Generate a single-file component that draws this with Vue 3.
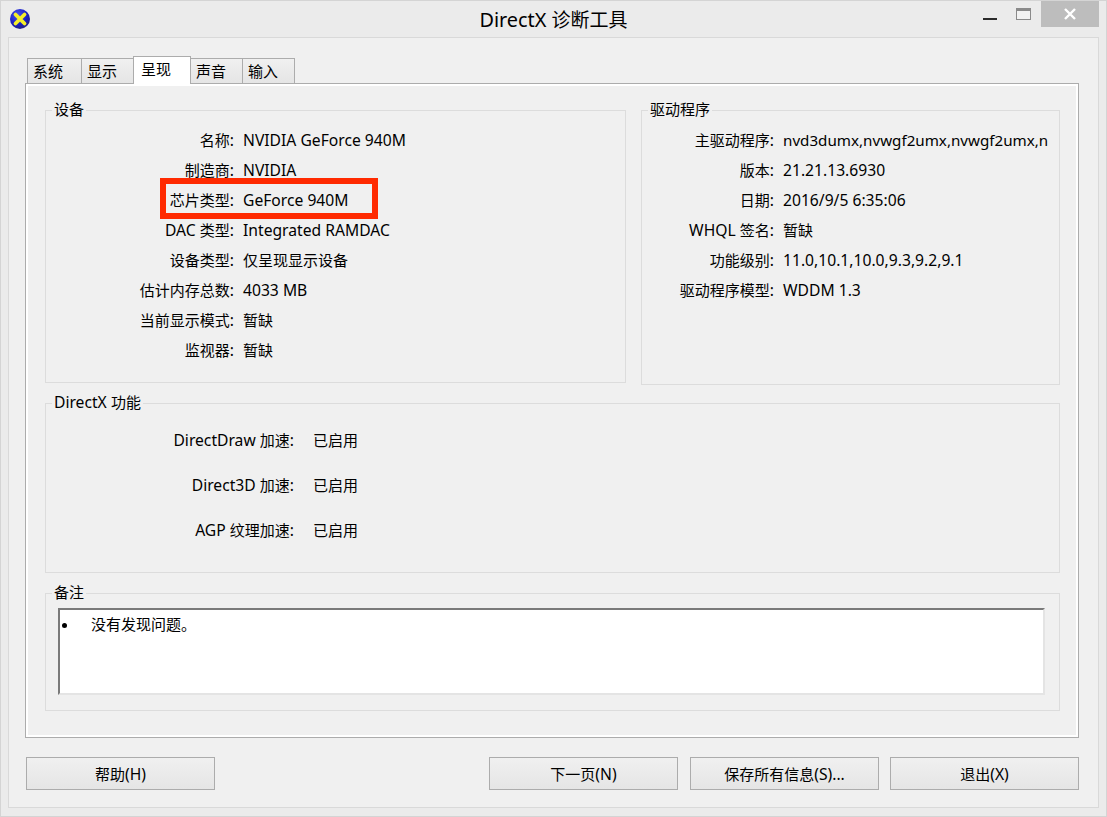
<script setup>
import { h } from 'vue'

const Mixed = (props) =>
  props.text
    .split(/([\u0000-\u02ff]+)/)
    .filter(Boolean)
    .map((part) =>
      /^[\u0000-\u02ff]/.test(part) ? h('span', { class: 'latin' }, part) : part
    )
Mixed.props = ['text']

const tabs = [
  { name: '系统', width: 55 },
  { name: '显示', width: 53 },
  { name: '呈现', width: 58, active: true },
  { name: '声音', width: 53 },
  { name: '输入', width: 53 },
]
const device = [
  ['名称:', 'NVIDIA GeForce 940M'],
  ['制造商:', 'NVIDIA'],
  ['芯片类型:', 'GeForce 940M'],
  ['DAC 类型:', 'Integrated RAMDAC'],
  ['设备类型:', '仅呈现显示设备'],
  ['估计内存总数:', '4033 MB'],
  ['当前显示模式:', '暂缺'],
  ['监视器:', '暂缺'],
]
const driver = [
  ['主驱动程序:', 'nvd3dumx,nvwgf2umx,nvwgf2umx,n', 'tight'],
  ['版本:', '21.21.13.6930'],
  ['日期:', '2016/9/5 6:35:06'],
  ['WHQL 签名:', '暂缺'],
  ['功能级别:', '11.0,10.1,10.0,9.3,9.2,9.1'],
  ['驱动程序模型:', 'WDDM 1.3'],
]
const features = [
  ['DirectDraw 加速:', '已启用'],
  ['Direct3D 加速:', '已启用'],
  ['AGP 纹理加速:', '已启用'],
]
</script>

<template>
  <div class="window">
    <header class="titlebar">
      <svg class="app-icon" width="24" height="24" viewBox="0 0 24 24">
        <defs>
          <radialGradient id="orb" cx="38%" cy="30%" r="80%">
            <stop offset="0" stop-color="#4a55f0" />
            <stop offset="0.6" stop-color="#1a1fc0" />
            <stop offset="0.85" stop-color="#20208a" />
            <stop offset="1" stop-color="#a8a8c8" />
          </radialGradient>
        </defs>
        <circle cx="12" cy="12" r="10" fill="url(#orb)" />
        <path d="M7.5 7.5 L16.5 16.5 M16.5 7.5 L7.5 16.5" stroke="#f6ee2a" stroke-width="3.8" stroke-linecap="round" />
      </svg>
      <h1 class="title"><Mixed text="DirectX 诊断工具" /></h1>
      <div class="controls">
        <span class="minimize"></span>
        <span class="maximize"></span>
        <span class="close">
          <svg width="14" height="12" viewBox="0 0 14 12">
            <path d="M2 1 L12 11 M12 1 L2 11" stroke="#fff" stroke-width="2.4" />
          </svg>
        </span>
      </div>
    </header>

    <div class="client">
      <nav class="tabs">
        <span
          v-for="tab in tabs"
          :key="tab.name"
          class="tab"
          :class="{ active: tab.active }"
          :style="{ width: tab.width + 'px' }"
        >{{ tab.name }}</span>
      </nav>

      <main class="panel">
        <div class="top-row">
          <section class="group device">
            <span class="legend">设备</span>
            <dl class="fields">
              <template v-for="row in device" :key="row[0]">
                <dt><Mixed :text="row[0]" /></dt>
                <dd><Mixed :text="row[1]" /></dd>
              </template>
            </dl>
            <span class="highlight"></span>
          </section>
          <section class="group driver">
            <span class="legend">驱动程序</span>
            <dl class="fields">
              <template v-for="row in driver" :key="row[0]">
                <dt><Mixed :text="row[0]" /></dt>
                <dd :class="row[2]"><Mixed :text="row[1]" /></dd>
              </template>
            </dl>
          </section>
        </div>

        <section class="group features">
          <span class="legend"><Mixed text="DirectX 功能" /></span>
          <dl class="fields">
            <template v-for="row in features" :key="row[0]">
              <dt><Mixed :text="row[0]" /></dt>
              <dd>{{ row[1] }}</dd>
            </template>
          </dl>
        </section>

        <section class="group notes">
          <span class="legend">备注</span>
          <div class="notes-box">
            <span class="bullet"></span>
            <span>没有发现问题。</span>
          </div>
        </section>
      </main>

      <footer class="buttons">
        <button class="btn"><Mixed text="帮助(H)" /></button>
        <span class="spacer"></span>
        <button class="btn next"><Mixed text="下一页(N)" /></button>
        <button class="btn"><Mixed text="保存所有信息(S)..." /></button>
        <button class="btn"><Mixed text="退出(X)" /></button>
      </footer>
    </div>
  </div>
</template>

<style>
html, body { margin: 0; padding: 0; background: #ebebeb; }
.latin { font-size: 1.045em; }
.tight .latin { font-size: 1.012em; }
</style>

<style scoped>
.window {
  box-sizing: border-box;
  width: 1107px;
  height: 817px;
  background: #ebebeb;
  border: 1px solid #d4d4d4;
  padding: 0 7px 8px;
  display: flex;
  flex-direction: column;
  font-family: "Noto Sans", "Noto Sans CJK SC", sans-serif;
  font-size: 15px;
  color: #000;
}
.titlebar {
  position: relative;
  flex: 0 0 36px;
  display: flex;
  align-items: center;
  justify-content: center;
}
.app-icon {
  position: absolute;
  left: 0;
  top: 6px;
}
.title {
  margin: 0;
  font-size: 19px;
  font-weight: 400;
  line-height: 36px;
  position: relative;
  top: 1px;
}
.controls {
  position: absolute;
  right: 0;
  top: 0;
  display: flex;
  align-items: flex-start;
}
.minimize {
  width: 14px;
  height: 2px;
  margin: 17px 19px 0 0;
  background: #2b2b2b;
}
.maximize {
  box-sizing: border-box;
  width: 15px;
  height: 12px;
  margin: 7px 10px 0 0;
  border: 1px solid #8a8a8a;
  border-top-width: 3px;
  background: #f2f2f2;
}
.close {
  width: 58px;
  height: 26px;
  background: #bdbdbd;
  display: flex;
  align-items: center;
  justify-content: center;
}
.client {
  flex: 1;
  background: #f0f0f0;
  border: 1px solid #d9d9d9;
  padding: 18px 19px 0 16px;
}
.tabs {
  display: flex;
  align-items: flex-end;
  height: 27px;
  padding-left: 2px;
  position: relative;
  z-index: 1;
}
.tab {
  box-sizing: border-box;
  height: 25px;
  padding: 0 0 0 5px;
  line-height: 25px;
  border: 1px solid #acacac;
  border-bottom: 0;
  background: linear-gradient(#f0f0f0, #e5e5e5);
  white-space: nowrap;
}
.tab + .tab { margin-left: -1px; }
.tab.active {
  height: 28px;
  margin-bottom: -1px;
  padding: 0 0 0 7px;
  background: #fff;
  line-height: 25px;
  position: relative;
}
.panel {
  box-sizing: border-box;
  height: 655px;
  border: 1px solid #acacac;
  box-shadow: inset 0 0 0 2px #fff;
  background: #f0f0f0;
  padding: 26px 18px 0 19px;
}
.top-row {
  display: flex;
  align-items: flex-start;
  gap: 15px;
}
.group {
  position: relative;
  box-sizing: border-box;
  border: 1px solid #dcdcdc;
}
.legend {
  position: absolute;
  top: -12px;
  left: 6px;
  padding: 0 2px;
  line-height: 20px;
  background: #f0f0f0;
}
.device { width: 581px; height: 273px; }
.driver { width: 419px; height: 275px; }
.features { height: 170px; margin-top: 18px; }
.notes { height: 118px; margin-top: 20px; padding: 14px 14px 0 12px; }
.fields {
  margin: 0;
  display: grid;
  align-content: start;
  line-height: 30px;
}
.fields dt { text-align: right; white-space: nowrap; }
.fields dd { margin: 0; white-space: nowrap; }
.device .fields {
  grid-template-columns: 188px 1fr;
  column-gap: 9px;
  padding-top: 14px;
}
.driver .fields {
  grid-template-columns: 132px 266px;
  column-gap: 9px;
  padding-top: 14px;
}
.features .fields {
  grid-template-columns: 248px 1fr;
  column-gap: 19px;
  grid-auto-rows: 45px;
  line-height: 45px;
  padding-top: 14px;
}
.highlight {
  position: absolute;
  left: 114px;
  top: 67px;
  width: 218px;
  height: 41px;
  box-sizing: border-box;
  border: 6px solid #ff2a00;
}
.notes-box {
  box-sizing: border-box;
  height: 87px;
  background: #fff;
  border: 2px solid;
  border-color: #7a7a7a #e4e4e4 #e4e4e4 #7a7a7a;
  display: flex;
  align-items: flex-start;
  padding: 3px 0 0 31px;
  position: relative;
  line-height: 22px;
}
.bullet {
  position: absolute;
  left: 2px;
  top: 13px;
  width: 5px;
  height: 5px;
  border-radius: 50%;
  background: #000;
}
.buttons {
  box-sizing: border-box;
  display: flex;
  gap: 11px;
  margin-top: 19px;
  padding-left: 1px;
  width: 1054px;
}
.spacer { flex: 1; }
.btn {
  box-sizing: border-box;
  flex: 0 0 189px;
  height: 33px;
  border: 1px solid #acacac;
  border-radius: 0;
  background: linear-gradient(#f0f0f0, #e5e5e5);
  font: inherit;
  color: #000;
  padding: 0;
}
.next { margin-right: 1px; }
</style>
